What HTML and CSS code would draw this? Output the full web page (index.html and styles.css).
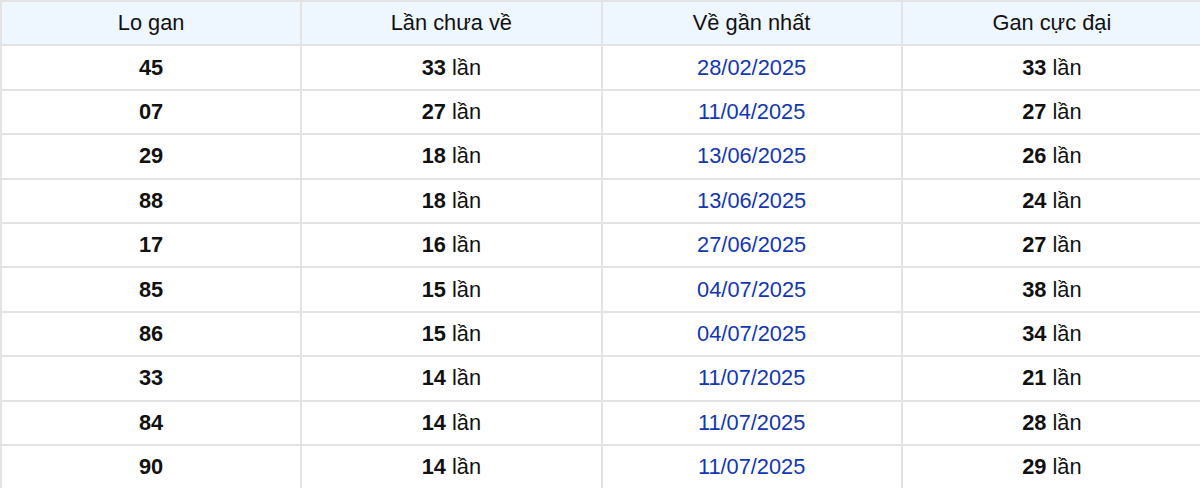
FILE: index.html
```html
<!DOCTYPE html>
<html lang="vi">
<head>
<meta charset="utf-8">
<title>Lo gan</title>
<link rel="stylesheet" href="styles.css">
</head>
<body>
<table class="gan-table">
  <thead>
    <tr><th>Lo gan</th><th>Lần chưa về</th><th>Về gần nhất</th><th>Gan cực đại</th></tr>
  </thead>
  <tbody>
    <tr><td><b>45</b></td><td><b>33</b> lần</td><td class="date">28/02/2025</td><td><b>33</b> lần</td></tr>
    <tr><td><b>07</b></td><td><b>27</b> lần</td><td class="date">11/04/2025</td><td><b>27</b> lần</td></tr>
    <tr><td><b>29</b></td><td><b>18</b> lần</td><td class="date">13/06/2025</td><td><b>26</b> lần</td></tr>
    <tr><td><b>88</b></td><td><b>18</b> lần</td><td class="date">13/06/2025</td><td><b>24</b> lần</td></tr>
    <tr><td><b>17</b></td><td><b>16</b> lần</td><td class="date">27/06/2025</td><td><b>27</b> lần</td></tr>
    <tr><td><b>85</b></td><td><b>15</b> lần</td><td class="date">04/07/2025</td><td><b>38</b> lần</td></tr>
    <tr><td><b>86</b></td><td><b>15</b> lần</td><td class="date">04/07/2025</td><td><b>34</b> lần</td></tr>
    <tr><td><b>33</b></td><td><b>14</b> lần</td><td class="date">11/07/2025</td><td><b>21</b> lần</td></tr>
    <tr><td><b>84</b></td><td><b>14</b> lần</td><td class="date">11/07/2025</td><td><b>28</b> lần</td></tr>
    <tr><td><b>90</b></td><td><b>14</b> lần</td><td class="date">11/07/2025</td><td><b>29</b> lần</td></tr>
  </tbody>
</table>
</body>
</html>
```
FILE: styles.css
```css
html, body {
  margin: 0;
  padding: 0;
  background: #ffffff;
  overflow: hidden;
}
.gan-table {
  width: 1203px;
  border-collapse: collapse;
  table-layout: fixed;
  font-family: "Liberation Sans", Arial, sans-serif;
  font-size: 21.8px;
  color: #111111;
}
.gan-table th,
.gan-table td {
  border: 2px solid #e3e3e6;
  text-align: center;
  vertical-align: middle;
  padding: 0;
  height: 42.4px;
}
.gan-table th {
  background: #eef6ff;
  font-weight: normal;
}
.gan-table td b {
  font-weight: bold;
}
.gan-table td.date {
  color: #1336b3;
}
```
